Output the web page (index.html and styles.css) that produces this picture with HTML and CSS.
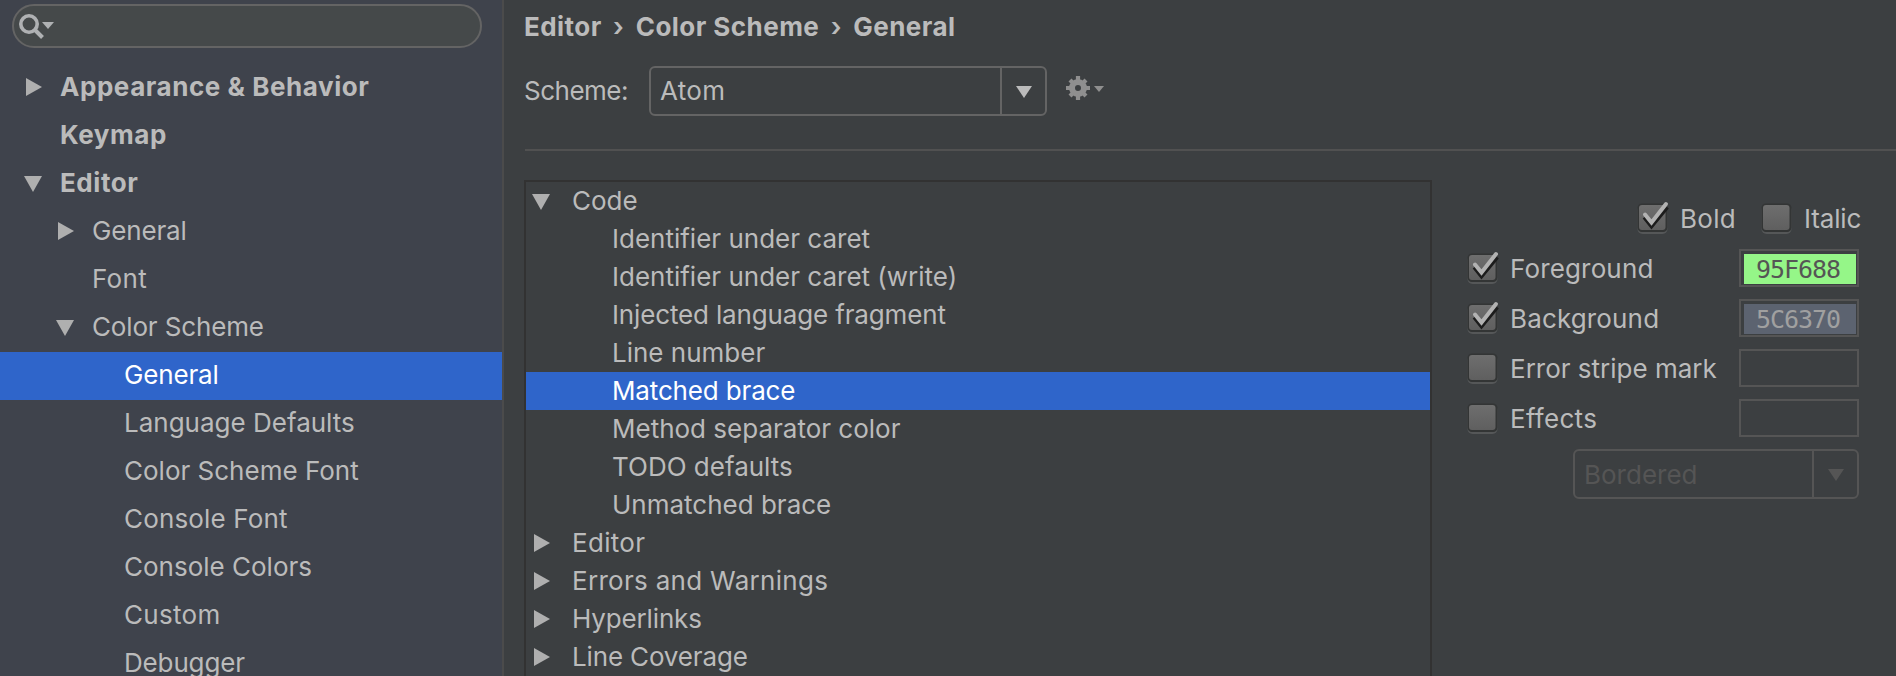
FILE: index.html
```html
<!DOCTYPE html>
<html lang="en">
<head>
<meta charset="utf-8">
<title>Preferences</title>
<link rel="stylesheet" href="styles.css">
</head>
<body>
<svg class="defs" width="0" height="0">
  <symbol id="right" viewBox="0 0 18 18"><path d="M2 0L18 9L2 18Z"/></symbol>
  <symbol id="down" viewBox="0 0 18 18"><path d="M0 2H18L9 18Z"/></symbol>
  <symbol id="box" viewBox="0 0 32 34">
    <rect x="0.500" y="4" width="30" height="29" rx="5" fill="#555758"/>
    <rect x="0.500" y="2.500" width="30" height="28.500" rx="4.500" fill="#333535"/>
    <rect x="2" y="4" width="26.500" height="25" rx="3" fill="url(#face)"/>
  </symbol>
  <symbol id="tick" viewBox="0 0 32 34">
    <path d="M7.500 16L14.500 25L30 6" fill="none" stroke="#1c1c1c" stroke-width="4.500"/>
    <path d="M8 13.500L14.500 21.500L29 3" fill="none" stroke="#b2b2b2" stroke-width="4" stroke-linecap="round"/>
  </symbol>
  <linearGradient id="face" x1="0" y1="0" x2="0" y2="1"><stop offset="0" stop-color="#6e6e6e"/><stop offset="1" stop-color="#5f5f5f"/></linearGradient>
</svg>
<div class="window">
  <aside class="sidebar">
    <div class="search">
      <svg width="40" height="28" viewBox="0 0 40 28"><circle cx="10" cy="10" r="8.200" fill="none" stroke="#afb1b3" stroke-width="3.600"/><path d="M16 16L23.500 23.500" stroke="#afb1b3" stroke-width="4"/><path d="M23 8H35L29 15Z" fill="#afb1b3"/></svg>
    </div>
    <nav class="nav">
      <div class="item l0"><svg><use href="#right"/></svg><span>Appearance &amp; Behavior</span></div>
      <div class="item l0"><i></i><span>Keymap</span></div>
      <div class="item l0"><svg><use href="#down"/></svg><span>Editor</span></div>
      <div class="item l1"><svg><use href="#right"/></svg><span class="tight">General</span></div>
      <div class="item l1"><i></i><span class="wider">Font</span></div>
      <div class="item l1"><svg><use href="#down"/></svg><span class="tight">Color Scheme</span></div>
      <div class="item l2 selected"><i></i><span class="tight">General</span></div>
      <div class="item l2"><i></i><span>Language Defaults</span></div>
      <div class="item l2"><i></i><span>Color Scheme Font</span></div>
      <div class="item l2"><i></i><span class="wide">Console Font</span></div>
      <div class="item l2"><i></i><span>Console Colors</span></div>
      <div class="item l2"><i></i><span class="wider">Custom</span></div>
      <div class="item l2"><i></i><span class="tight">Debugger</span></div>
    </nav>
  </aside>
  <main class="main">
    <div class="crumbs"><span>Editor</span><b>›</b><span>Color Scheme</span><b>›</b><span>General</span></div>
    <div class="scheme">
      <label>Scheme:</label>
      <div class="combo"><span class="wider">Atom</span><div class="drop"><svg width="16" height="12"><path d="M0 0H16L8 12Z"/></svg></div></div>
      <svg class="gear" width="40" height="24" viewBox="0 0 40 24">
        <g fill="none" stroke="#8f8f8f"><circle cx="12" cy="12" r="6" stroke-width="6"/><path stroke-width="4.200" d="M12 0V5M12 19V24M0 12H5M19 12H24M4 4L7 7M17 17L20 20M4 20L7 17M17 7L20 4"/></g>
        <path d="M28 10H38L33 16Z" fill="#8f8f8f"/>
      </svg>
    </div>
    <div class="body">
      <div class="tree">
        <div class="row"><svg><use href="#down"/></svg><span>Code</span></div>
        <div class="row child"><span>Identifier under caret</span></div>
        <div class="row child"><span>Identifier under caret (write)</span></div>
        <div class="row child"><span class="tight">Injected language fragment</span></div>
        <div class="row child"><span>Line number</span></div>
        <div class="row child selected"><span class="tight">Matched brace</span></div>
        <div class="row child"><span>Method separator color</span></div>
        <div class="row child"><span>TODO defaults</span></div>
        <div class="row child"><span>Unmatched brace</span></div>
        <div class="row"><svg><use href="#right"/></svg><span class="wider">Editor</span></div>
        <div class="row"><svg><use href="#right"/></svg><span class="wider">Errors and Warnings</span></div>
        <div class="row"><svg><use href="#right"/></svg><span class="tight">Hyperlinks</span></div>
        <div class="row"><svg><use href="#right"/></svg><span class="tight">Line Coverage</span></div>
      </div>
      <div class="options">
        <div class="opt style">
          <svg><use href="#box"/><use href="#tick"/></svg><span class="bold">Bold</span>
          <svg><use href="#box"/></svg><span class="tight">Italic</span>
        </div>
        <div class="opt"><svg><use href="#box"/><use href="#tick"/></svg><span class="wide">Foreground</span><div class="color"><div class="fill green">95F688</div></div></div>
        <div class="opt"><svg><use href="#box"/><use href="#tick"/></svg><span class="wide">Background</span><div class="color"><div class="fill slate">5C6370</div></div></div>
        <div class="opt"><svg><use href="#box"/></svg><span>Error stripe mark</span><div class="color"></div></div>
        <div class="opt"><svg><use href="#box"/></svg><span class="wider">Effects</span><div class="color"></div></div>
        <div class="combo disabled"><span>Bordered</span><div class="drop"><svg width="16" height="12"><path d="M0 0H16L8 12Z"/></svg></div></div>
      </div>
    </div>
  </main>
</div>
</body>
</html>
```
FILE: styles.css
```css
* { box-sizing: border-box; }
body { margin: 0; background: #3c3f41; color: #bbbbbb; font: 26px/38px Inter, "Liberation Sans", sans-serif; overflow: hidden; }
.defs { position: absolute; }
.window { display: flex; width: 1896px; height: 676px; overflow: hidden; }
span, label { white-space: nowrap; }
.tight { letter-spacing: -0.15px; }
.wide { letter-spacing: 0.15px; }
.wider { letter-spacing: 0.3px; }
.sidebar { width: 504px; flex: none; background: #3f434c; border-right: 2px solid #4b4b4b; padding-top: 4px; }
.search { width: 470px; height: 44px; margin-left: 12px; border: 2px solid #646464; border-radius: 22px; background: #45494a; padding: 8px 0 0 5px; }
.search svg { display: block; }
.nav { padding-top: 16px; }
.item { display: flex; height: 48px; padding-top: 4px; }
.item svg, .row svg { width: 18px; height: 18px; fill: #afafaf; flex: none; }
.item svg { margin: 10px 18px 0 0; }
.item i { width: 36px; flex: none; }
.l0 { padding-left: 24px; font-weight: 700; letter-spacing: 0.55px; }
.l1 { padding-left: 56px; }
.l2 { padding-left: 88px; }
.selected { background: #2f65ca; color: #fff; }
.main { flex: 1; display: flex; flex-direction: column; padding-left: 20px; }
.crumbs { display: flex; flex: none; height: 66px; padding-top: 8px; font-weight: 700; letter-spacing: 0.45px; }
.crumbs b { width: 34px; text-align: center; font-weight: 600; }
.scheme { display: flex; flex: none; height: 85px; margin-left: 1px; border-bottom: 2px solid #515151; }
.scheme label { width: 125px; margin-left: -1px; padding-top: 6px; letter-spacing: -0.5px; }
.combo { display: flex; width: 398px; height: 50px; border: 2px solid #646464; border-radius: 6px; }
.combo span { flex: 1; padding: 4px 0 0 9px; }
.drop { width: 45px; border-left: 2px solid #646464; padding: 18px 0 0 14px; }
.drop svg { display: block; fill: #bbbbbb; }
.gear { margin: 10px 0 0 19px; }
.body { display: flex; flex: none; padding-top: 29px; }
.tree { width: 908px; height: 520px; flex: none; border: 2px solid #323232; }
.row { display: flex; height: 38px; padding-left: 6px; }
.row svg { margin: 10px 22px 0 0; }
.child { padding-left: 86px; }
.options { width: 392px; flex: none; margin-left: 35px; padding-top: 19px; }
.opt { display: flex; height: 50px; }
.opt span { padding-top: 1px; }
.opt svg { width: 32px; height: 34px; margin: 2px 11px 0 0; flex: none; }
.opt .color { margin-left: auto; }
.style { padding-left: 170px; }
.bold { width: 81px; flex: none; letter-spacing: 0.3px; }
.color { width: 120px; height: 38px; border: 2px solid #555555; padding: 3px 1px 0 3px; }
.fill { height: 30px; padding: 1px 0 0 12px; line-height: 30px; font-family: "DejaVu Sans Mono", monospace; font-size: 25px; letter-spacing: -1.05px; }
.green { background: #95f688; color: #555; }
.slate { background: #5c6370; color: #a0a0a0; }
.disabled { width: 286px; margin-left: 106px; border-color: #555; color: #555; }
.disabled span { padding-top: 5px; }
.disabled .drop { border-color: #555; }
.disabled .drop svg { fill: #555; }
```
